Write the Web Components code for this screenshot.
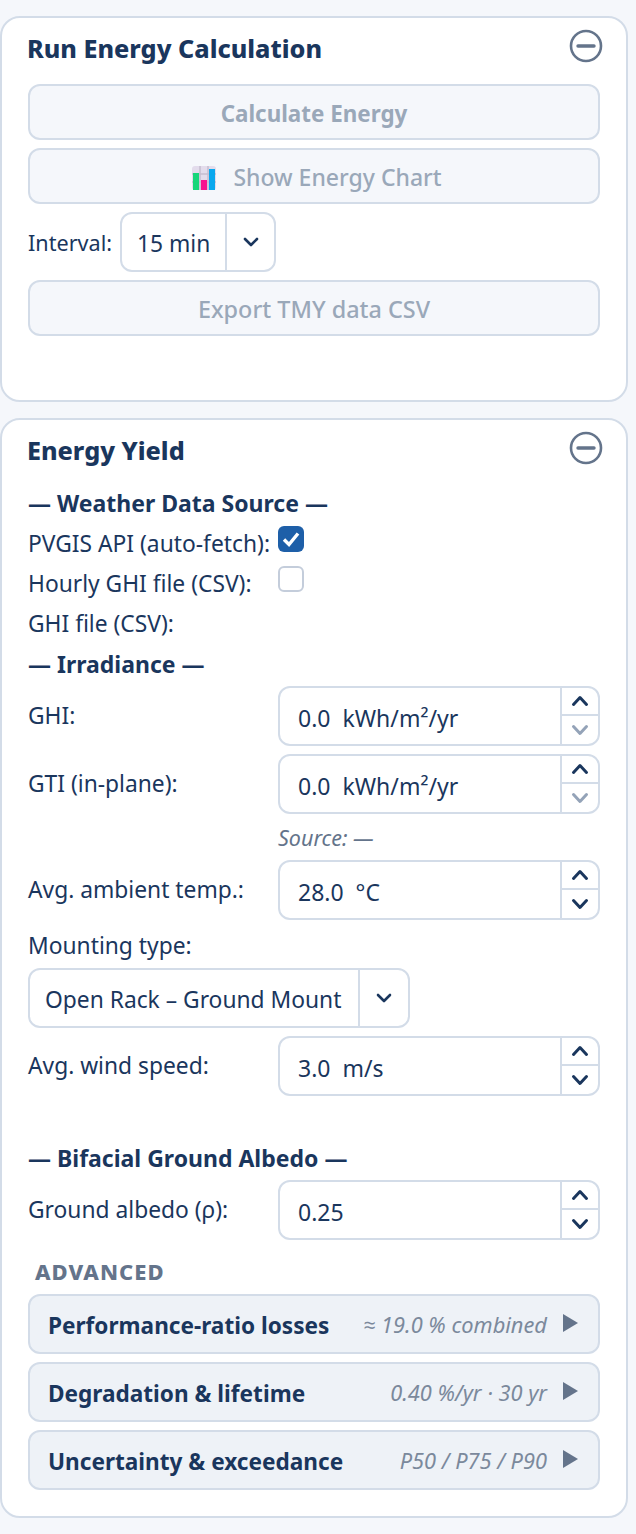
<!DOCTYPE html>
<html lang="en">
<head>
<meta charset="UTF-8">
<title>Energy Yield</title>
<style>
  body { margin: 0; background: #f5f7fb; font-family: "Noto Sans", "Open Sans", sans-serif; font-size: 22.8px; color: #1a365d; }
  main { display: block; padding: 16px 8px 16px 0; }
</style>
</head>
<body>
<main>
  <energy-panel title="Run Energy Calculation" style="height:386px">
    <energy-button strong>Calculate Energy</energy-button>
    <energy-button chart>Show Energy Chart</energy-button>
    <interval-row></interval-row>
    <energy-button style="font-size:23.4px">Export TMY data CSV</energy-button>
  </energy-panel>
  <energy-panel title="Energy Yield" style="margin-top:16px">
    <sec-head style="margin-top:17px">— Weather Data Source —</sec-head>
    <check-row checked style="margin-top:5px">PVGIS API (auto-fetch):</check-row>
    <check-row>Hourly GHI file (CSV):</check-row>
    <check-row none>GHI file (CSV):</check-row>
    <sec-head style="margin-top:6px">— Irradiance —</sec-head>
    <num-field style="margin-top:7px" label="GHI:" value="0.0  kWh/m²/yr" dim></num-field>
    <num-field style="margin-top:8px" label="GTI (in-plane):" value="0.0  kWh/m²/yr" dim></num-field>
    <source-note></source-note>
    <num-field label="Avg. ambient temp.:" value="28.0  °C"></num-field>
    <mount-field></mount-field>
    <num-field style="margin-top:8px" label="Avg. wind speed:" value="3.0  m/s"></num-field>
    <sec-head style="margin-top:47px">— Bifacial Ground Albedo —</sec-head>
    <num-field style="margin-top:7px" label="Ground albedo (ρ):" value="0.25"></num-field>
    <adv-label>ADVANCED</adv-label>
    <adv-row hint="≈ 19.0 % combined">Performance-ratio losses</adv-row>
    <adv-row style="margin-top:8px" hint="0.40 %/yr · 30 yr">Degradation &amp; lifetime</adv-row>
    <adv-row style="margin-top:8px" hint="P50 / P75 / P90">Uncertainty &amp; exceedance</adv-row>
  </energy-panel>
</main>

<template id="tplPanel">
  <style>
    :host { display: block; box-sizing: border-box; background: #fff; border: 2px solid #d3dce8; border-radius: 20px; padding: 11px 26px 26px 26px; }
    header { display: flex; justify-content: space-between; align-items: center; height: 40px; margin-bottom: 15px; }
    h2 { margin: -2px 0 0 -1px; font-size: 25.2px; font-weight: 800; line-height: 40px; }
    svg { margin-right: -3px; margin-top: -6px; display: block; }
  </style>
  <header>
    <h2></h2>
    <svg width="34" height="34" viewBox="0 0 34 34" fill="none" stroke="#64748b" stroke-width="2.6"><circle cx="17" cy="17" r="15"/><path d="M9 17h16" stroke-width="3.4" stroke-linecap="round"/></svg>
  </header>
  <slot></slot>
</template>

<template id="tplSelect">
  <style>
    :host { display: inline-flex; box-sizing: border-box; height: 60px; background: #fff; border: 2px solid #d3dce8; border-radius: 12px; align-items: stretch; }
    .val { flex: 1; display: flex; align-items: center; padding: 2px 15px 0; white-space: pre; }
    .arrow { width: var(--arrow, 50px); border-left: 2px solid #d3dce8; display: flex; align-items: center; justify-content: center; }
  </style>
  <div class="val"><slot></slot></div>
  <div class="arrow"><svg width="16" height="10" viewBox="0 0 16 10" fill="none" stroke="#1a365d" stroke-width="2.6" stroke-linecap="round" stroke-linejoin="round"><path d="M2 2l6 6 6-6"/></svg></div>
</template>

<script>
  function shadow(el, html) {
    el.attachShadow({ mode: 'open' }).innerHTML = html;
    return el.shadowRoot;
  }

  const chevron = (d, color) => `<svg width="18" height="12" viewBox="0 0 18 12" fill="none" stroke="${color}" stroke-width="3" stroke-linecap="round" stroke-linejoin="round"><path d="${d}"/></svg>`;

  class EnergyPanel extends HTMLElement {
    constructor() {
      super();
      const root = this.attachShadow({ mode: 'open' });
      root.appendChild(document.getElementById('tplPanel').content.cloneNode(true));
      root.querySelector('h2').textContent = this.getAttribute('title');
      this.removeAttribute('title');
    }
  }

  class EnergyButton extends HTMLElement {
    constructor() {
      super();
      const icon = this.hasAttribute('chart') ? `<svg width="26" height="24" viewBox="0 0 26 24"><rect x="1" y="0" width="24" height="24" rx="3" fill="#e3dcec"/><path d="M1 8h24M1 16h24M9 0v24M17 0v24" stroke="#c6bdd0" stroke-width="1.5"/><rect x="2" y="7" width="6" height="17" fill="#16d67a"/><rect x="10" y="14" width="6" height="10" fill="#f7128f"/><rect x="18" y="3" width="6" height="21" fill="#0aa8ee"/></svg>` : '';
      shadow(this, `<style>
        :host { display: flex; box-sizing: border-box; height: 56px; margin-bottom: 8px; background: #f5f7fb; border: 2px solid #d3dce8; border-radius: 12px; align-items: center; justify-content: center; gap: 16px; color: #9aa8b9; font-weight: 500; font-size: 23px; }
        :host([strong]) { font-weight: 700; font-size: 22.4px; }
        :host([chart]) { padding-left: 5px; }
        svg { display: block; margin-top: 4px; }
        span { padding-top: 1px; }
        :host([strong]) span { padding-top: 3px; }
      </style>${icon}<span><slot></slot></span>`);
    }
  }

  class IntervalRow extends HTMLElement {
    constructor() {
      super();
      shadow(this, `<style>
        :host { display: flex; align-items: center; height: 60px; margin-bottom: 8px; }
        span { width: 92px; flex: none; padding-top: 1px; font-size: 21.6px; }
        energy-select { width: 156px; }
      </style><span>Interval:</span><energy-select>15 min</energy-select>`);
    }
  }

  class EnergySelect extends HTMLElement {
    constructor() {
      super();
      this.attachShadow({ mode: 'open' }).appendChild(document.getElementById('tplSelect').content.cloneNode(true));
    }
  }

  class SecHead extends HTMLElement {
    constructor() {
      super();
      shadow(this, `<style>
        :host { display: block; height: 30px; line-height: 30px; font-weight: 700; font-size: 23px; white-space: nowrap; }
      </style><slot></slot>`);
    }
  }

  class CheckRow extends HTMLElement {
    constructor() {
      super();
      let box = '';
      if (this.hasAttribute('checked')) {
        box = `<svg class="box" width="26" height="26" viewBox="0 0 26 26"><rect width="26" height="26" rx="6" fill="#1e5fa8"/><path d="M6 13.5l5 5 9-11" fill="none" stroke="#fff" stroke-width="3.4"/></svg>`;
      } else if (!this.hasAttribute('none')) {
        box = `<svg class="box" width="26" height="26" viewBox="0 0 26 26"><rect x="1" y="1" width="24" height="24" rx="5" fill="#fff" stroke="#c4cddb" stroke-width="2"/></svg>`;
      }
      shadow(this, `<style>
        :host { display: flex; align-items: center; height: 40px; }
        span { width: 250px; flex: none; white-space: nowrap; }
        .box { align-self: flex-start; margin-top: 3px; display: block; }
      </style><span><slot></slot></span>${box}`);
    }
  }

  class NumField extends HTMLElement {
    constructor() {
      super();
      const dim = this.hasAttribute('dim');
      shadow(this, `<style>
        :host { display: flex; align-items: center; height: 60px; }
        .label { width: 250px; flex: none; margin-top: -1px; white-space: nowrap; }
        .box { flex: 1; height: 100%; box-sizing: border-box; display: flex; border: 2px solid #d3dce8; border-radius: 12px; background: #fff; }
        .val { flex: 1; display: flex; align-items: center; padding: 3px 18px 0; white-space: pre; font-size: 23px; }
        .spin { width: 36px; border-left: 2px solid #d3dce8; display: flex; flex-direction: column; }
        .spin div { flex: 1; display: flex; align-items: center; justify-content: center; }
        .spin div:first-child { flex: 0 0 26px; }
        .spin div + div { border-top: 2px solid #d3dce8; }
      </style>
      <div class="label">${this.getAttribute('label')}</div>
      <div class="box">
        <div class="val">${this.getAttribute('value')}</div>
        <div class="spin">
          <div>${chevron('M2.5 9.5l6.5-7 6.5 7', '#1a365d')}</div>
          <div>${chevron('M2.5 2.5l6.5 7 6.5-7', dim ? '#94a3b8' : '#1a365d')}</div>
        </div>
      </div>`);
    }
  }

  class SourceNote extends HTMLElement {
    constructor() {
      super();
      shadow(this, `<style>
        :host { display: block; height: 46px; line-height: 48px; padding-left: 250px; font-size: 21.5px; font-style: italic; color: #64748b; }
      </style>Source: —`);
    }
  }

  class MountField extends HTMLElement {
    constructor() {
      super();
      shadow(this, `<style>
        :host { display: block; }
        div { height: 48px; line-height: 52px; }
        energy-select { width: 382px; --arrow: 48px; }
      </style><div>Mounting type:</div><energy-select>Open Rack – Ground Mount</energy-select>`);
    }
  }

  class AdvLabel extends HTMLElement {
    constructor() {
      super();
      shadow(this, `<style>
        :host { display: block; height: 54px; line-height: 62px; padding-left: 7px; font-size: 22px; font-weight: 800; letter-spacing: 1px; color: #64748b; }
      </style><slot></slot>`);
    }
  }

  class AdvRow extends HTMLElement {
    constructor() {
      super();
      shadow(this, `<style>
        :host { display: flex; align-items: center; box-sizing: border-box; height: 60px; background: #eef2f7; border: 2px solid #d3dce8; border-radius: 12px; padding: 0 20px 0 18px; }
        b { font-weight: 700; flex: 1; white-space: nowrap; font-size: 22.6px; padding-top: 3px; }
        i { font-size: 21.8px; color: #7b899c; margin-right: 16px; white-space: nowrap; padding-top: 1px; }
        svg { display: block; margin-top: -2px; }
      </style><b><slot></slot></b><i>${this.getAttribute('hint')}</i><svg width="15" height="18" viewBox="0 0 15 18"><path d="M0 0l15 9-15 9z" fill="#64748b"/></svg>`);
    }
  }

  customElements.define('energy-panel', EnergyPanel);
  customElements.define('energy-button', EnergyButton);
  customElements.define('energy-select', EnergySelect);
  customElements.define('interval-row', IntervalRow);
  customElements.define('sec-head', SecHead);
  customElements.define('check-row', CheckRow);
  customElements.define('num-field', NumField);
  customElements.define('source-note', SourceNote);
  customElements.define('mount-field', MountField);
  customElements.define('adv-label', AdvLabel);
  customElements.define('adv-row', AdvRow);
</script>
</body>
</html>
